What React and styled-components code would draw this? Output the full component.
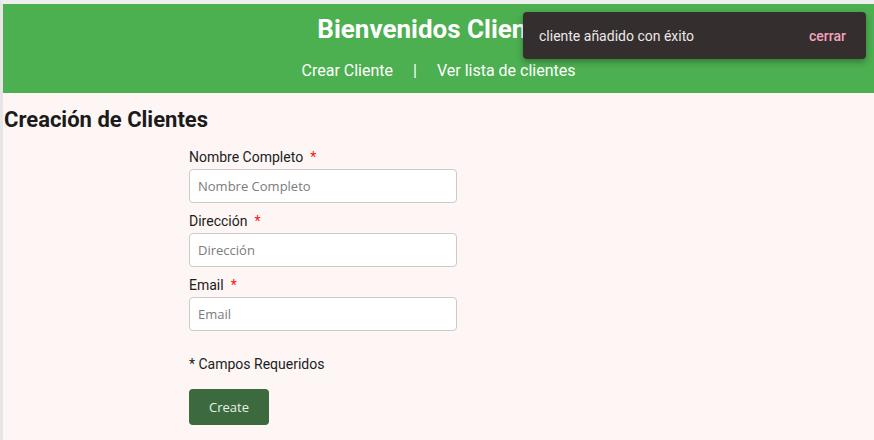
import React from "react";
import styled, { createGlobalStyle } from "styled-components";

const Global = createGlobalStyle`
  html, body { margin: 0; padding: 0; background: #fdf6f5; }
  body { font-family: Roboto, "Liberation Sans", sans-serif; }
  * { box-sizing: border-box; }
`;

const Frame = styled.div`
  position: relative;
  min-height: 440px;
  border-left: 3px solid #e7e5e5;
  border-top: 4px solid #efeeee;
  background: #fdf6f5;
  overflow: hidden;
`;

const Header = styled.header`
  background: #4caf50;
  height: 89px;
  display: flex;
  flex-direction: column;
  align-items: center;
  padding-top: 8px;
`;

const Title = styled.h1`
  margin: 0 0 0 3px;
  font-size: 26px;
  font-weight: 700;
  color: #fff;
  line-height: 34px;
`;

const Nav = styled.nav`
  margin-top: 15px;
  display: flex;
  gap: 20px;
  font-size: 16px;
  color: #fff;
  line-height: 20px;
`;

const NavLink = styled.a`
  color: #fff;
  text-decoration: none;
  cursor: pointer;
`;

const Toast = styled.div`
  position: absolute;
  top: 8px;
  left: 520px;
  width: 343px;
  height: 47px;
  background: #342e2f;
  border-radius: 4px;
  box-shadow: 0 3px 6px rgba(0, 0, 0, 0.3);
  display: flex;
  align-items: center;
  justify-content: space-between;
  padding: 0 20px 0 16px;
  font-size: 14px;
`;

const ToastText = styled.span`
  color: #ece8e8;
`;

const ToastAction = styled.button`
  background: none;
  border: none;
  padding: 0;
  font-family: inherit;
  font-size: 14px;
  font-weight: 500;
  color: #f4a3bd;
  cursor: pointer;
`;

const Main = styled.main`
  padding: 12px 1px 0;
`;

const Heading = styled.h2`
  margin: 0;
  font-size: 22px;
  font-weight: 700;
  color: #1c1a1a;
  line-height: 30px;
`;

const Form = styled.form`
  margin: 14px 0 0 185px;
  width: 268px;
  display: flex;
  flex-direction: column;
`;

const Field = styled.div`
  display: flex;
  flex-direction: column;
  margin-bottom: 10px;
`;

const Label = styled.label`
  font-size: 14px;
  color: #211d1d;
  line-height: 16px;
  margin-bottom: 4px;
`;

const Star = styled.span`
  color: #f11;
  margin-left: 7px;
`;

const Input = styled.input`
  height: 34px;
  width: 268px;
  border: 1px solid #cbcbcb;
  border-radius: 4px;
  background: #fff;
  padding: 0 8px;
  font-family: "Open Sans", sans-serif;
  font-size: 13px;
  color: #333;
  &::placeholder { color: #7b7b7b; }
`;

const Note = styled.p`
  margin: 14px 0 0;
  font-size: 14px;
  color: #211d1d;
  line-height: 18px;
`;

const Button = styled.button`
  margin-top: 16px;
  width: 80px;
  height: 36px;
  background: #3c6a3e;
  border: none;
  border-radius: 4px;
  color: #e6f2e6;
  font-family: "Open Sans", sans-serif;
  font-size: 13px;
  cursor: pointer;
`;

const fields = [
  { id: "nombre", label: "Nombre Completo" },
  { id: "direccion", label: "Dirección" },
  { id: "email", label: "Email" },
];

export default function App() {
  return (
    <>
      <Global />
      <Frame>
        <Header>
          <Title>Bienvenidos Clientes</Title>
          <Nav>
            <NavLink>Crear Cliente</NavLink>
            <span>|</span>
            <NavLink>Ver lista de clientes</NavLink>
          </Nav>
        </Header>
        <Toast>
          <ToastText>cliente añadido con éxito</ToastText>
          <ToastAction type="button">cerrar</ToastAction>
        </Toast>
        <Main>
          <Heading>Creación de Clientes</Heading>
          <Form onSubmit={(e) => e.preventDefault()}>
            {fields.map((f) => (
              <Field key={f.id}>
                <Label htmlFor={f.id}>
                  {f.label}
                  <Star>*</Star>
                </Label>
                <Input id={f.id} placeholder={f.label} />
              </Field>
            ))}
            <Note>* Campos Requeridos</Note>
            <Button type="submit">Create</Button>
          </Form>
        </Main>
      </Frame>
    </>
  );
}
